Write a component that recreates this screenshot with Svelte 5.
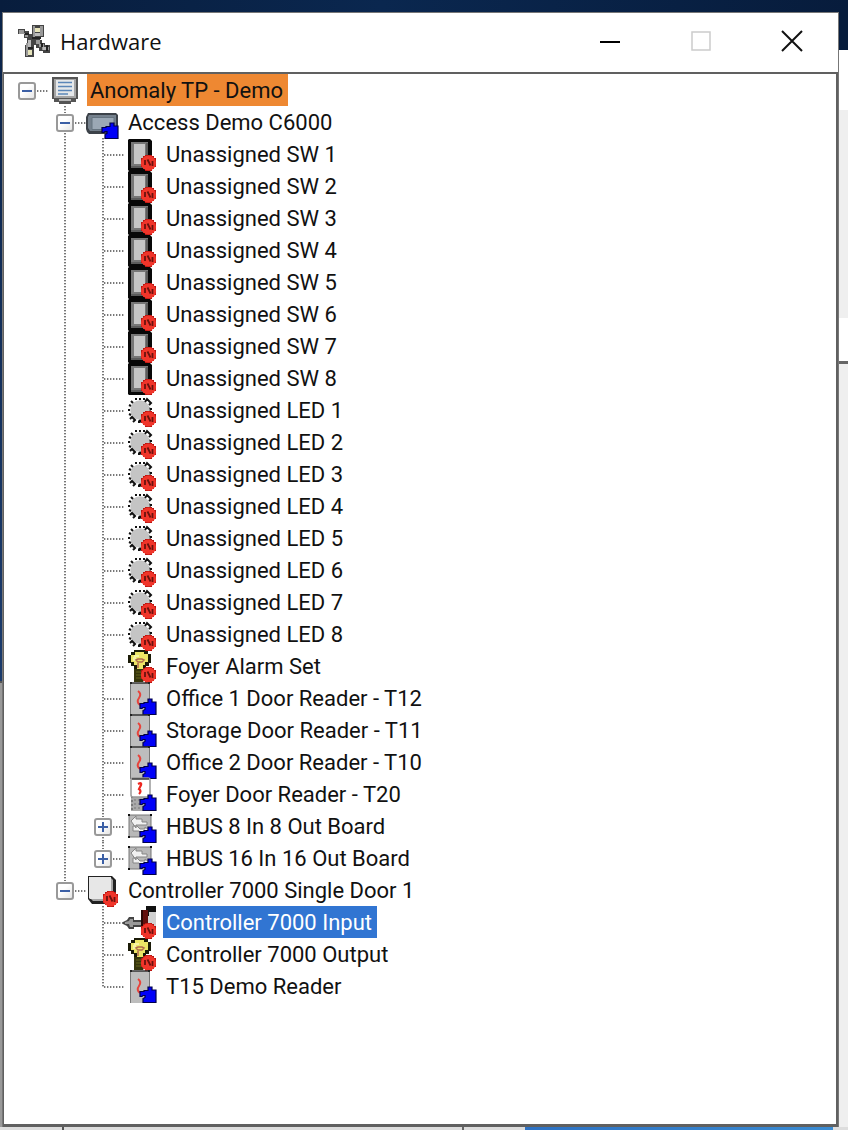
<script>
  const numbered = (prefix, icon) =>
    Array.from({ length: 8 }, (_, i) => ({ name: `${prefix} ${i + 1}`, icon }));

  const root = {
    name: 'Anomaly TP - Demo',
    icon: 'server',
    children: [
      {
        name: 'Access Demo C6000',
        icon: 'c6000',
        children: [
          ...numbered('Unassigned SW', 'switch'),
          ...numbered('Unassigned LED', 'led'),
          { name: 'Foyer Alarm Set', icon: 'bulb' },
          { name: 'Office 1 Door Reader - T12', icon: 'reader' },
          { name: 'Storage Door Reader - T11', icon: 'reader' },
          { name: 'Office 2 Door Reader - T10', icon: 'reader' },
          { name: 'Foyer Door Reader - T20', icon: 'keypad' },
          { name: 'HBUS 8 In 8 Out Board', icon: 'board', children: [] },
          { name: 'HBUS 16 In 16 Out Board', icon: 'board', children: [] }
        ]
      },
      {
        name: 'Controller 7000 Single Door 1',
        icon: 'controller',
        children: [
          { name: 'Controller 7000 Input', icon: 'input' },
          { name: 'Controller 7000 Output', icon: 'bulb' },
          { name: 'T15 Demo Reader', icon: 'reader' }
        ]
      }
    ]
  };

  let selected = $state('Controller 7000 Input');
  let open = $state({
    'Anomaly TP - Demo': true,
    'Access Demo C6000': true,
    'Controller 7000 Single Door 1': true
  });
</script>

{#snippet stop()}
  <path fill="#b81410" d="M20 17h7v1h2v2h2v9h-2v2h-2v2h-7v-2h-2v-2h-2v-9h2v-2h2z" />
  <circle cx="23.500" cy="25" r="7.600" fill="#f0352a" />
  <path fill="none" stroke="#6b120e" stroke-width="1.800" d="M20 22v5M22.500 21.500l3 6M27.500 23v5" />
{/snippet}

{#snippet puzzle()}
  <path fill="#0000f8" stroke="#00004a" stroke-width="1.200" d="M23 17h4v3h4v12.500H18v-4l2-1v-2h-2l-1 1h-2v-5h4v-1h4z" />
{/snippet}

{#snippet glyph(kind)}
  <svg class="glyph" viewBox="0 0 32 32" aria-hidden="true">
    {#if kind === 'server'}
      <path fill="#555" d="M3 3h26v22H3z" />
      <path fill="#a5a5a5" d="M5 5h22v19H5z" />
      <path fill="#e6e8ea" d="M7 6h18v16H7z" />
      <path stroke="#5b86b8" stroke-width="1.600" d="M9 8.500h14M9 12.500h14M9 16.500h14M9 20h10" />
      <path fill="#555" d="M5 25h22v3h-5v2H10v-2H5z" />
      <path fill="#b8b8b8" d="M10 25h12v2H10z" />
    {:else if kind === 'c6000'}
      <path fill="#3c4249" d="M1 7h28l2 2v17l-2 2H2l-2-2-1-3V11z" />
      <path fill="#75818d" d="M2 9h27v16H3l-2-3V11z" />
      <path fill="#9ba8b5" stroke="#667480" d="M5 11.500h22v12H5z" />
      {@render puzzle()}
    {:else if kind === 'switch'}
      <path fill="#080808" d="M4 1h21l2 2v30H4l-1-1V2z" />
      <path fill="#777" d="M6 4h17v26H6z" />
      <path fill="#5c5c5c" d="M21 5h2v25H6v-2h15z" />
      <path fill="#c6c6c6" d="M9 6h11v20H9z" />
      {@render stop()}
    {:else if kind === 'led'}
      <path fill="#0a0a0a" d="M25 13l1 6-6 9-7 1v-2z" />
      <circle cx="15" cy="16" r="9.800" fill="#c4c4c4" />
      <path
        fill="none"
        stroke="#111"
        stroke-width="2"
        d="M10 5h2M14 5h2M18 5h2M6 7l2 2M4 11l2 1M4 15v2M4 20l2 1M20 8l2-3 4 4-2 2M26 14v2M5 25l2-2 3 3-2 2M13 28h2"
      />
      {@render stop()}
    {:else if kind === 'bulb'}
      <path fill="#1b1b08" d="M9 0h11v1h3v3h3v9h-2v3h-3v4H9v-4H6v-3H3V5h3V2h3z" />
      <path fill="#ece566" d="M10 2h9v2h4v8h-3v3h-2v5h-6v-5H9v-3H6V5h4z" />
      <path fill="#f7f3a2" d="M9 5h5v2h-3v4H8V7h1z" />
      <path fill="none" stroke="#b0694c" stroke-width="1.500" d="M11 10l2-1h4l2 1-2 2h-4zM13 13v5" />
      <path fill="#35350c" d="M9 19h11v10l-2 3H9z" />
      <path stroke="#66641b" d="M11 22h7M11 25h6M11 28h5" />
      {@render stop()}
    {:else if kind === 'reader'}
      <path fill="#bdbdbd" d="M5 1h20v32H5z" />
      <path stroke="#333" stroke-width="1.500" d="M5 1h20" />
      <path fill="none" stroke="#777" d="M5.500 1v32M24.500 1v32" />
      <path fill="#222" d="M5 0h2v2H5zM23 0h2v2h-2z" />
      <path fill="none" stroke="#e8433b" stroke-width="2" d="M13 9q4 3 1 7t1 7" />
      {@render puzzle()}
    {:else if kind === 'keypad'}
      <path fill="#aaa" d="M6 17h18v16H6z" />
      <path stroke="#444" stroke-dasharray="2 2" d="M7 18v14" />
      <path stroke="#777" stroke-dasharray="2 2" d="M10 21v10M14 21v10" />
      <rect x="6" y="0" width="19" height="19" rx="2" fill="#fff" stroke="#999" stroke-width="1.500" />
      <path stroke="#333" stroke-width="1.500" d="M7 1h17" />
      <path fill="none" stroke="#ed2720" stroke-width="2.200" d="M13 6q4-2 3 1l-2 4q3 2 0 5" />
      {@render puzzle()}
    {:else if kind === 'board'}
      <path fill="#b8b8b8" stroke="#777" d="M4 5h22v22H4z" />
      <path fill="#f1f1f1" stroke="#858585" d="M6 11l5-5v3h6v3h5v3H11v3zM24 20l-4-3v2h-5l-3-3H8v5h6l2 3h5z" />
      <path fill="#111" d="M3 4h2v2H3zM25 4h2v2h-2zM3 26h2v2H3z" />
      {@render puzzle()}
    {:else if kind === 'controller'}
      <path fill="#222" d="M1 2h24l4 4v22l-3 2H5l-4-5z" />
      <path fill="#a5a5a5" d="M24 4l2 2v21H6l-3-3h21z" />
      <path fill="#e7e7e7" d="M2 3h22v22H3l-1-1z" />
      {@render stop()}
    {:else if kind === 'input'}
      <path fill="#444" d="M-2 16l4-2 2-3h5v3h7v7H9v2H4l-2-3-4-2z" />
      <path fill="#999" d="M0 16l4-1 1-2h3v3h8v3H8v2H5l-1-3H0z" />
      <path fill="#d1d1d1" d="M23 6h8v14h-8z" />
      <path fill="#111" d="M21 0h10v6h-7v4h-3z" />
      <path fill="#630f0d" d="M16 4h7v17h-7z" />
      <path fill="#280706" d="M16 4h2v17h-2z" />
      {@render stop()}
    {/if}
  </svg>
{/snippet}

{#snippet node(item)}
  <li>
    <div class="row">
      <span class="joint">
        {#if item.children}
          <button
            class="toggle"
            aria-label={`Toggle ${item.name}`}
            aria-expanded={!!open[item.name]}
            onclick={() => (open[item.name] = !open[item.name])}
          >
            <svg viewBox="0 0 14 14" aria-hidden="true">
              <path stroke="#3b5fa5" stroke-width="2" d={open[item.name] ? 'M2 7h10' : 'M2 7h10M7 2v10'} />
            </svg>
          </button>
        {/if}
      </span>
      {@render glyph(item.icon)}
      <button
        class="label"
        class:site={item === root}
        class:selected={selected === item.name}
        onclick={() => (selected = item.name)}>{item.name}</button>
    </div>
    {#if item.children?.length && open[item.name]}
      <ul>
        {#each item.children as child (child.name)}
          {@render node(child)}
        {/each}
      </ul>
    {/if}
  </li>
{/snippet}

<div class="desktop">
  <div class="left-edge"></div>
  <main class="window">
    <header>
      <svg class="app-icon" viewBox="0 0 32 32" aria-hidden="true">
        <path fill="#444" d="M0 4h7v2h4v3h3V0h12v12h-4v3h2v3h3v2h5v8h-7v-2h-4v-3h-3v-3h-2v12H7V20h2v-7H6v-4H0z" />
        <path fill="#999" d="M1 5h5v3h4v4H7V9H1zM15 1h2v11h-2zM22 1h3v10h-3zM8 18h2v13H8zM15 15h3v4h3v3h3v3h7v-3h-5v-3h-4v-4h-4z" />
        <path fill="#e6e4bb" d="M17 3h5v4h-5zM10 25h4v5h-4z" />
        <path fill="#bbb" d="M17 8h5v3h-5zM10 15h3v7h-3zM25 22h3v3h-3z" />
        <path fill="#222" d="M7 8h4v2H7zM14 12h9v2h-9zM10 22h5v2h-5zM23 18h2v4h-2zM28 20h2v6h-2z" />
      </svg>
      <h1>Hardware</h1>
      <div class="controls">
        <button aria-label="Minimize">
          <svg viewBox="0 0 22 22" aria-hidden="true"><path stroke="#000" stroke-width="2" d="M1 12h20" /></svg>
        </button>
        <button aria-label="Maximize" disabled>
          <svg viewBox="0 0 22 22" aria-hidden="true"><path fill="none" stroke="#ccc" stroke-width="1.500" d="M2 2h18v18H2z" /></svg>
        </button>
        <button aria-label="Close">
          <svg viewBox="0 0 22 22" aria-hidden="true"><path stroke="#111" stroke-width="2" d="M1 1l20 20M21 1L1 21" /></svg>
        </button>
      </div>
    </header>
    <div class="pane">
      <ul class="tree">
        {@render node(root)}
      </ul>
    </div>
  </main>
  <div class="right-edge"></div>
  <div class="taskbar"><span></span></div>
</div>

<style>
  :global(body) {
    margin: 0;
  }

  .desktop {
    box-sizing: border-box;
    min-height: 100vh;
    padding-top: 12px;
    display: grid;
    grid-template-columns: 2px 1fr 9px;
    grid-template-rows: 1fr 3px;
    background: linear-gradient(90deg, #081d3d, #0a274f 45%, #071c3c);
    font-family: Roboto, "Liberation Sans", sans-serif;
    color: #111;
  }

  .left-edge {
    background: linear-gradient(#0b2449, #1b3b6c 669px, #555 669px 671px, #999 671px);
  }

  .right-edge {
    background: linear-gradient(
      #071c3c 38px,
      #fff 38px 98px,
      #efefef 98px 306px,
      #fff 306px 349px,
      #666 349px 352px,
      #efefef 352px
    );
  }

  .taskbar {
    grid-column: 1 / -1;
    display: flex;
    justify-content: flex-end;
    padding-right: 15px;
    background: linear-gradient(90deg, #ddd 62px, #555 62px 64px, #ddd 64px 462px, #666 462px 464px, #ddd 464px);
  }

  .taskbar span {
    width: 37%;
    background: linear-gradient(90deg, #2d72c4, #3a8bd2);
  }

  .window {
    display: flex;
    flex-direction: column;
    min-width: 0;
    background: #fff;
    border: 1px solid #777;
    border-width: 1px 1px 0 1px;
  }

  header {
    box-sizing: border-box;
    display: flex;
    align-items: center;
    height: 59px;
    padding: 0 1px 3px 15px;
  }

  .app-icon {
    width: 32px;
    height: 32px;
    margin-right: 10px;
  }

  h1 {
    margin: 0;
    font: 400 22px/32px "Open Sans", "Noto Sans", sans-serif;
    color: #111;
  }

  .controls {
    display: flex;
    height: 100%;
    margin-left: auto;
  }

  .controls button {
    display: grid;
    place-items: center;
    width: 91px;
    padding: 0;
    border: 0;
    background: none;
  }

  .controls svg {
    width: 22px;
    height: 22px;
  }

  .pane {
    flex: 1;
    border: 2px solid #606060;
    border-width: 2px 2px 3px 1px;
  }

  ul {
    margin: 0;
    padding: 0 0 0 38px;
    list-style: none;
  }

  .tree {
    padding-left: 4px;
  }

  li {
    --dots: #777 0 1px, #ccc 1px 2px, #fff 2px 3px, #777 3px 4px, #ccc 4px 5px, #fff 5px 6px;
    --trunk: repeating-linear-gradient(var(--dots)) 18px 0 / 2px 100% no-repeat;
  }

  ul ul > li:not(:last-child) {
    background: var(--trunk);
  }

  ul ul > li:last-child > .row {
    background: repeating-linear-gradient(var(--dots)) 18px 0 / 2px 18px no-repeat;
  }

  .row {
    display: flex;
    align-items: center;
    height: 32px;
  }

  .joint {
    box-sizing: border-box;
    display: flex;
    justify-content: center;
    width: 41px;
    height: 32px;
    padding: 8px 3px 0 0;
    background: repeating-linear-gradient(90deg, var(--dots)) 20px 16px / 21px 2px no-repeat;
  }

  .toggle {
    display: grid;
    place-items: center;
    box-sizing: border-box;
    width: 18px;
    height: 18px;
    padding: 0;
    border: 2px solid #999;
    border-radius: 3px;
    background: linear-gradient(135deg, #fff 40%, #e6e6e6);
    box-shadow: 0 0 0 1px #fff;
  }

  .toggle svg {
    width: 14px;
    height: 14px;
  }

  .glyph {
    width: 32px;
    height: 32px;
    margin-right: 6px;
    overflow: visible;
    flex: none;
  }

  .label {
    box-sizing: border-box;
    height: 32px;
    padding: 2px 5px 0 3px;
    border: 0;
    background: none;
    font: 400 22px/30px Roboto, "Liberation Sans", sans-serif;
    color: inherit;
    text-align: left;
    white-space: nowrap;
  }

  .site {
    background: #ee8832;
  }

  .selected {
    background: #3175d2;
    color: #fff;
  }
</style>
